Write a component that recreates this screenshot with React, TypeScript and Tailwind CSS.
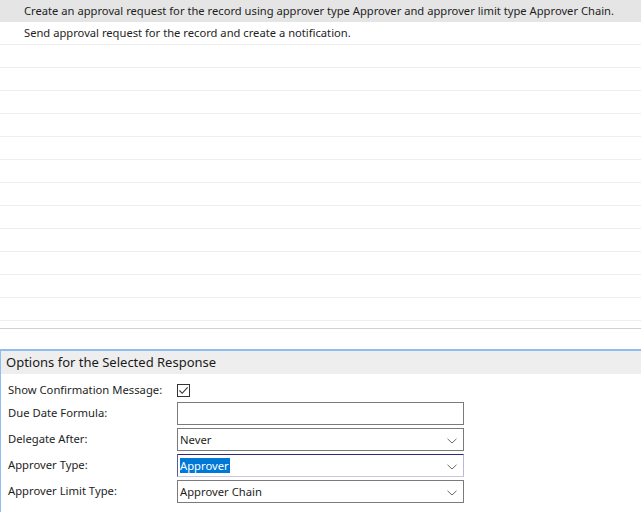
import React from "react";

const rows = [
  "Create an approval request for the record using approver type Approver and approver limit type Approver Chain.",
  "Send approval request for the record and create a notification.",
  "", "", "", "", "", "", "", "", "", "", "", "",
];

function Chevron() {
  return (
    <svg width="10" height="6" viewBox="0 0 10 6" className="absolute right-[6px] top-[9px]">
      <path d="M0.5 0.8 L5 5 L9.5 0.8" fill="none" stroke="#6b6b6b" strokeWidth="1" />
    </svg>
  );
}

export default function App() {
  return (
    <div
      className="w-[641px] h-[512px] overflow-hidden bg-white text-[#1e1e1e]"
      style={{ fontFamily: '"Noto Sans", "Open Sans", sans-serif' }}
    >
      <div className="flex flex-col">
        {rows.map((t, i) =>
          i === 0 ? (
            <div key={i} className="h-[22px] bg-[#e5e5e5] pl-[24px] text-[11.2px] leading-[22px] whitespace-nowrap">
              {t}
            </div>
          ) : (
            <div key={i} className="h-[23px] border-b border-[#eeeeee] pl-[24px] text-[11.2px] leading-[22px] whitespace-nowrap">
              {t}
            </div>
          )
        )}
      </div>
      <div className="h-[7px]" />
      <div className="h-px bg-[#d2d2d2]" />
      <div className="h-[20px]" />
      <div className="border-t-2 border-l border-[#8fbcf1]">
        <div className="h-[23px] bg-[#eeeeee] pl-[5px] text-[13px] leading-[23px] text-[#1a1a1a]">
          Options for the Selected Response
        </div>
        <div className="pt-[10px] flex flex-col text-[11.25px]">
          <div className="flex items-center h-[13px]">
            <div className="w-[176px] pl-[7px] whitespace-nowrap">Show Confirmation Message:</div>
            <div className="w-[13px] h-[13px] border border-[#333333] relative">
              <svg width="11" height="11" viewBox="0 0 11 11" className="absolute left-0 top-0">
                <path d="M1.5 5.5 L4.2 8.3 L9.6 2.4" fill="none" stroke="#333333" strokeWidth="1.1" />
              </svg>
            </div>
          </div>
          <div className="flex items-center h-[23px] mt-[5px]">
            <div className="w-[176px] pl-[7px]">Due Date Formula:</div>
            <div className="w-[287px] h-[23px] border border-[#7a7a7a]" />
          </div>
          <div className="flex items-center h-[23px] mt-[3px]">
            <div className="w-[176px] pl-[7px]">Delegate After:</div>
            <div className="relative w-[287px] h-[23px] border border-[#7a7a7a] pl-[2px] leading-[21px]">
              Never
              <Chevron />
            </div>
          </div>
          <div className="flex items-center h-[23px] mt-[3px]">
            <div className="w-[176px] pl-[7px]">Approver Type:</div>
            <div className="relative w-[287px] h-[23px] border border-t-[#2b2a7a] border-l-[#5d5c96] border-r-[#b9b8dc] border-b-[#c8c7e4] pl-[2px] flex items-center">
              <span className="bg-[#0078d7] text-white leading-[15px] pr-px">Approver</span>
              <Chevron />
            </div>
          </div>
          <div className="flex items-center h-[23px] mt-[3px]">
            <div className="w-[176px] pl-[7px]">Approver Limit Type:</div>
            <div className="relative w-[287px] h-[23px] border border-[#7a7a7a] pl-[2px] leading-[21px]">
              Approver Chain
              <Chevron />
            </div>
          </div>
          <div className="flex items-center h-[23px] mt-[3px]">
            <div className="w-[176px] pl-[7px] text-[#1c2c6c]">Specific Approver User ID:</div>
          </div>
        </div>
      </div>
    </div>
  );
}
